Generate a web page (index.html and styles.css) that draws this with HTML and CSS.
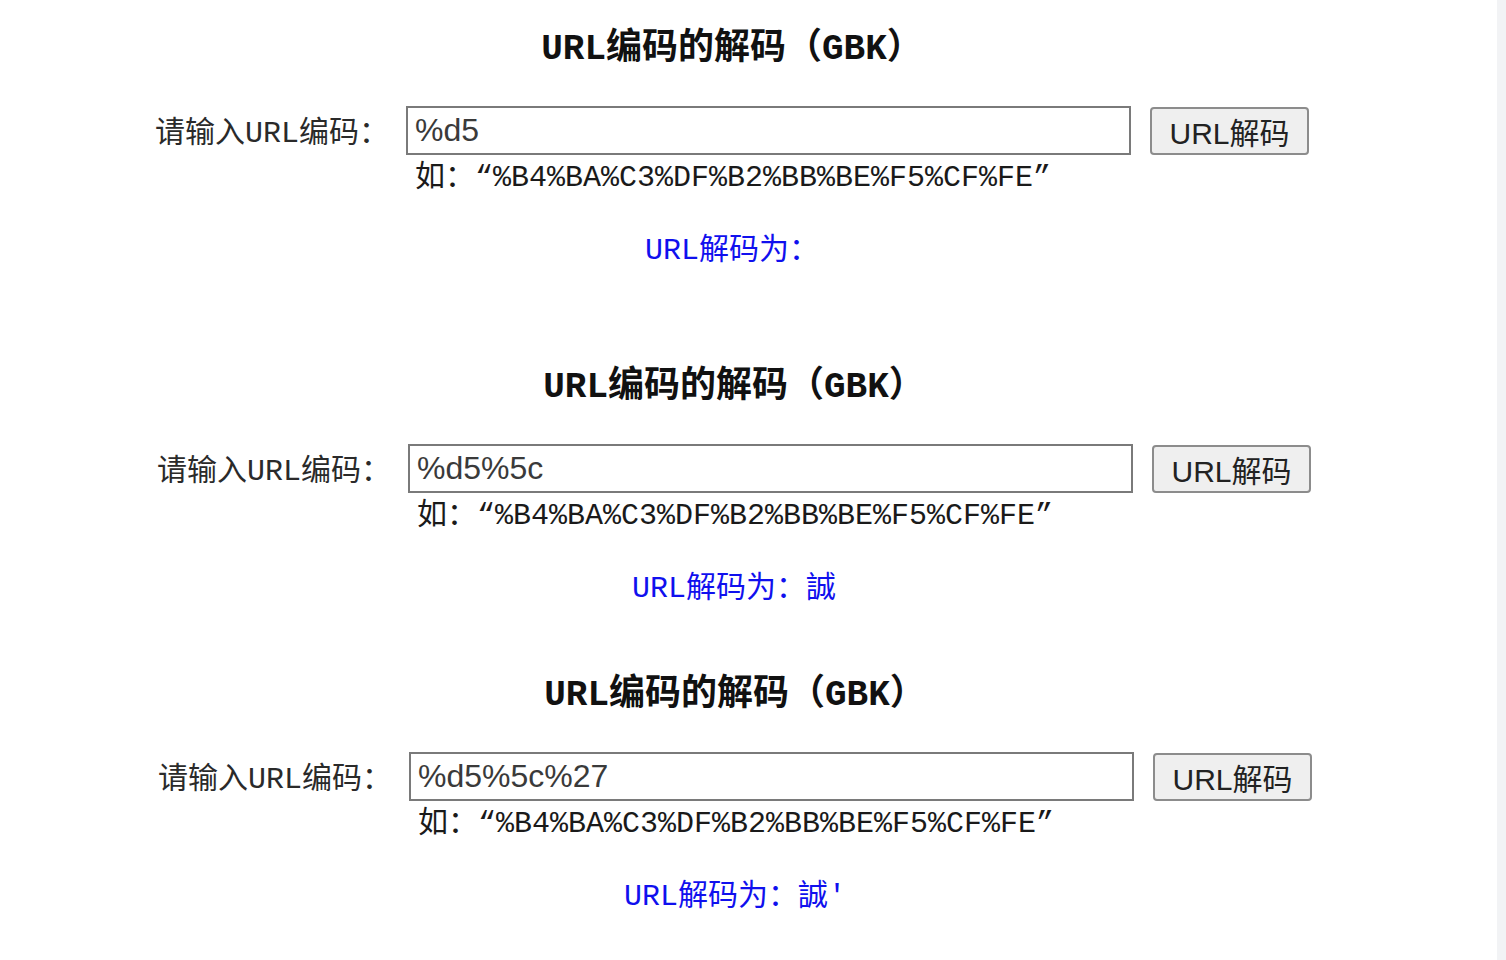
FILE: index.html
```html
<!DOCTYPE html>
<html lang="zh-CN">
<head>
<meta charset="utf-8">
<title>URL编码的解码（GBK）</title>
<link rel="stylesheet" href="styles.css">
</head>
<body>
<div class="page">
  <main class="content">
    <section class="tool tool--first">
      <h3 class="tool__title">URL编码的解码（GBK）</h3>
      <form class="tool__form">
        <label class="tool__label">请输入URL编码：</label>
        <input class="tool__input" type="text" value="%d5">
        <button class="tool__button" type="button">URL解码</button>
        <div class="tool__hint">如：“%B4%BA%C3%DF%B2%BB%BE%F5%CF%FE”</div>
      </form>
      <p class="tool__result">URL解码为：</p>
    </section>
    <section class="tool tool--second">
      <h3 class="tool__title">URL编码的解码（GBK）</h3>
      <form class="tool__form">
        <label class="tool__label">请输入URL编码：</label>
        <input class="tool__input" type="text" value="%d5%5c">
        <button class="tool__button" type="button">URL解码</button>
        <div class="tool__hint">如：“%B4%BA%C3%DF%B2%BB%BE%F5%CF%FE”</div>
      </form>
      <p class="tool__result">URL解码为：誠</p>
    </section>
    <section class="tool tool--third">
      <h3 class="tool__title">URL编码的解码（GBK）</h3>
      <form class="tool__form">
        <label class="tool__label">请输入URL编码：</label>
        <input class="tool__input" type="text" value="%d5%5c%27">
        <button class="tool__button" type="button">URL解码</button>
        <div class="tool__hint">如：“%B4%BA%C3%DF%B2%BB%BE%F5%CF%FE”</div>
      </form>
      <p class="tool__result">URL解码为：誠'</p>
    </section>
  </main>
  <div class="scrollbar"></div>
</div>
</body>
</html>
```

FILE: styles.css
```css
html, body {
  margin: 0;
  padding: 0;
  background: #ffffff;
}

.page {
  display: flex;
  height: 960px;
  overflow: hidden;
}

.content {
  flex: 1;
  font-family: "Liberation Mono", "Noto Sans CJK SC", monospace;
  color: #222;
}

.scrollbar {
  width: 9px;
  flex: none;
  background: #f2f3f5;
}

.tool {
  width: 1154px;
  margin-left: 155px;
}

.tool--first { margin-left: 155px; padding-top: 32px; padding-bottom: 104px; }
.tool--second { margin-left: 157px; padding-bottom: 74px; }
.tool--third { margin-left: 158px; }

.tool__title {
  margin: 0;
  font-size: 36px;
  line-height: 36px;
  font-weight: bold;
  text-align: center;
  color: #111;
}

.tool__form {
  margin: 38px 0 0;
  display: grid;
  grid-template-columns: 251px 725px 19px 159px;
  align-items: center;
}

.tool__label {
  grid-column: 1;
  padding-top: 6px;
  font-size: 30px;
  line-height: 30px;
  color: #2a2a2a;
  white-space: nowrap;
}

.tool__input {
  grid-column: 2;
  box-sizing: border-box;
  width: 725px;
  height: 49px;
  margin: 0;
  border: 2px solid #7a7a7a;
  padding: 0 7px;
  font-family: "Liberation Sans", Arial, sans-serif;
  font-size: 32px;
  color: #3a3a3a;
  background: #fff;
  outline: none;
}

.tool__button {
  grid-column: 4;
  box-sizing: border-box;
  width: 159px;
  height: 48px;
  margin: 0;
  border: 2px solid #8c8c8c;
  border-radius: 4px;
  background: #efefef;
  font-family: "Liberation Sans", "Noto Sans CJK SC", sans-serif;
  font-size: 30px;
  color: #222;
  padding: 0 0 3px;
}

.tool__hint {
  grid-column: 2 / 5;
  margin-top: 8px;
  padding-left: 9px;
  font-size: 30px;
  line-height: 30px;
  color: #1a1a1a;
  white-space: nowrap;
}

.tool__result {
  margin: 43px 0 0;
  font-size: 30px;
  line-height: 30px;
  text-align: center;
  color: #1010ee;
}
```
